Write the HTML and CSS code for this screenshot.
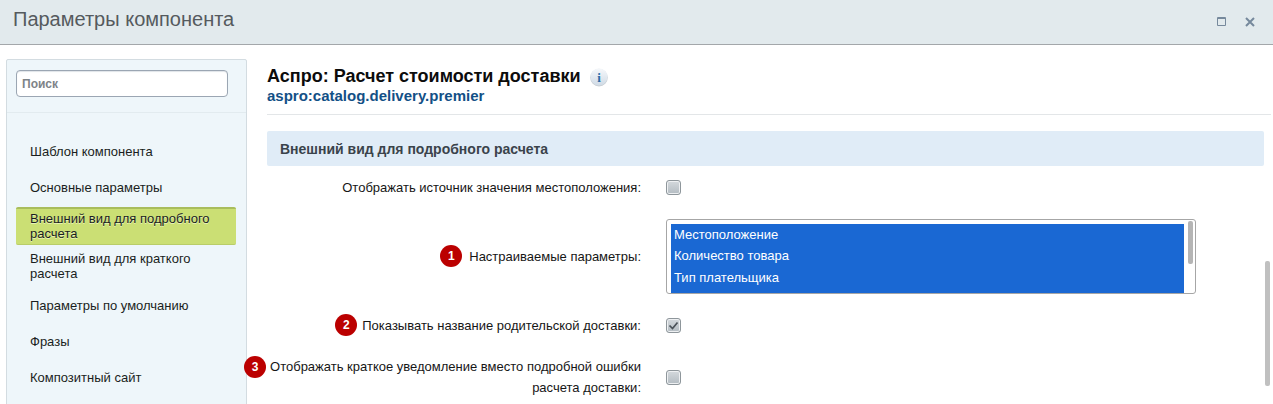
FILE: index.html
```html
<!DOCTYPE html>
<html lang="ru">
<head>
<meta charset="utf-8">
<title>Параметры компонента</title>
<link rel="stylesheet" href="styles.css">
</head>
<body>
<div class="dialog">
  <header class="titlebar">
    <h1 class="dialog-title">Параметры компонента</h1>
    <div class="window-tools">
      <svg class="tool" width="10" height="10" viewBox="0 0 10 10"><path d="M.5 .5h8v8h-8z M.5 1.5h8" fill="none" stroke="#76899c" stroke-width="1"/></svg>
      <svg class="tool" width="10" height="10" viewBox="0 0 10 10"><path d="M1 1l8 8M9 1l-8 8" fill="none" stroke="#76899c" stroke-width="2"/></svg>
    </div>
  </header>
  <div class="body-row">
    <aside class="sidebar">
      <div class="search-wrap"><input class="search" type="text" placeholder="Поиск"></div>
      <nav class="menu">
        <a class="menu-item">Шаблон компонента</a>
        <a class="menu-item">Основные параметры</a>
        <a class="menu-item active">Внешний вид для подробного расчета</a>
        <a class="menu-item double">Внешний вид для краткого расчета</a>
        <a class="menu-item">Параметры по умолчанию</a>
        <a class="menu-item">Фразы</a>
        <a class="menu-item">Композитный сайт</a>
      </nav>
    </aside>
    <main class="content">
      <div class="heading">
        <div class="heading-line">
          <h2 class="component-name">Аспро: Расчет стоимости доставки</h2>
          <span class="info"><svg width="20" height="20" viewBox="0 0 20 20"><defs><linearGradient id="ig" x1="0" y1="0" x2="0" y2="1"><stop offset="0" stop-color="#f6f8fb"/><stop offset="1" stop-color="#d0dbe6"/></linearGradient></defs><circle cx="10" cy="10.6" r="8.8" fill="#c9ced3"/><circle cx="10" cy="9.8" r="8.6" fill="url(#ig)"/><text x="10" y="15" text-anchor="middle" class="info-i">i</text></svg></span>
        </div>
        <div class="component-id">aspro:catalog.delivery.premier</div>
      </div>
      <div class="section-head">Внешний вид для подробного расчета</div>
      <div class="form">
        <div class="row row-first">
          <div class="label">Отображать источник значения местоположения:</div>
          <div class="control"><span class="check"></span></div>
        </div>
        <div class="row row-select">
          <div class="label"><span class="label-text"><span class="badge">1</span>Настраиваемые параметры:</span></div>
          <div class="control">
            <div class="listbox">
              <div class="options">
                <div class="option">Местоположение</div>
                <div class="option">Количество товара</div>
                <div class="option">Тип плательщика</div>
              </div>
              <span class="list-thumb"></span>
            </div>
          </div>
        </div>
        <div class="row row-third">
          <div class="label"><span class="label-text"><span class="badge badge-near">2</span>Показывать название родительской доставки:</span></div>
          <div class="control"><span class="check"><svg width="13" height="13" viewBox="0 0 13 13"><path d="M2.5 6.5l3 3 5-6" fill="none" stroke="#4a5158" stroke-width="1.7"/></svg></span></div>
        </div>
        <div class="row row-last">
          <div class="label"><span class="label-text"><span class="badge badge-far">3</span>Отображать краткое уведомление вместо подробной ошибки расчета доставки:</span></div>
          <div class="control"><span class="check"></span></div>
        </div>
      </div>
      <span class="page-thumb"></span>
    </main>
  </div>
</div>
</body>
</html>
```
FILE: styles.css
```css
* { box-sizing: border-box; }
html, body { margin: 0; height: 100%; overflow: hidden; background: #fff; }
body { font-family: "Liberation Sans", Arial, sans-serif; font-size: 13px; color: #1f1f1f; }
.dialog { display: flex; flex-direction: column; height: 404px; overflow: hidden; }
.titlebar { flex: none; height: 45px; background: #e2eaed; border-bottom: 1px solid #a3a7aa; display: flex; align-items: center; justify-content: space-between; padding: 0 18px 6px 13px; }
.dialog-title { margin: 0; font-weight: 400; font-size: 20px; color: #555a5e; }
.window-tools { display: flex; gap: 18px; align-items: center; padding-top: 5px; }
.tool { display: block; }
.body-row { flex: 1; display: flex; min-height: 0; padding: 14px 2px 0 6px; }
.sidebar { flex: none; width: 241px; height: 360px; background: #eef6fa; border: 1px solid #d3dce1; border-radius: 2px 2px 0 0; }
.search-wrap { padding: 10px 18px 15px 9px; border-bottom: 1px solid #e2ebef; height: 53px; }
.search { display: block; width: 212px; height: 27px; border: 1px solid #9ba6b3; border-radius: 4px; background: #fff; padding: 0 5px; font: bold 12px "Liberation Sans", Arial, sans-serif; box-shadow: inset 0 1px 1px #dfe4e8; outline: none; }
.search::placeholder { color: #7d8388; opacity: 1; }
.menu { display: flex; flex-direction: column; padding: 20px 0 0 9px; }
.menu-item { display: flex; align-items: center; width: 220px; height: 36px; padding: 0 14px; line-height: 15px; font-size: 13px; color: #1a1e21; }
.menu-item.active { height: 38px; margin-top: 2px; padding-bottom: 1px; background: #cbdf74; border-top: 2px solid #a9bd5c; border-bottom: 1px solid #b9cd68; border-radius: 2px; text-shadow: 0 1px 0 #e8f2b8; }
.menu-item.double { height: 42px; }
.content { position: relative; flex: 1; padding-left: 20px; min-width: 0; }
.heading { height: 56px; border-bottom: 1px solid #e3e6e8; padding-top: 7px; }
.heading-line { display: flex; align-items: center; height: 20px; }
.component-name { margin: 0; font-size: 18px; line-height: 20px; font-weight: 700; color: #0c0c0c; }
.info { margin-left: 8px; display: flex; margin-top: 2px; }
.info-i { font: bold 13px "Liberation Serif", serif; fill: #2b6ba5; }
.component-id { font-size: 15px; line-height: 17px; font-weight: 700; color: #135086; margin-top: 1px; }
.section-head { margin: 16px 7px 0 0; height: 35px; line-height: 36px; background: #e0ecf7; border-radius: 2px; padding-left: 13px; font-size: 14px; font-weight: 700; color: #3a434b; }
.form { display: flex; flex-direction: column; }
.row { display: grid; grid-template-columns: 374px 1fr; column-gap: 25px; align-items: center; }
.row-first { height: 42px; }
.row-select { height: 96px; }
.row-third { height: 42px; }
.row-last { height: 62px; }
.label { text-align: right; font-size: 13px; line-height: 21px; color: #161616; }
.label-text { position: relative; display: inline-block; }
.badge { position: absolute; left: -29px; top: 50%; width: 22px; height: 22px; margin-top: -11px; border-radius: 50%; background: #bb0000; color: #fff; font-size: 12px; font-weight: 700; line-height: 22px; text-align: center; }
.badge-near { left: -27px; }
.badge-far { left: -23px; top: 11px; }
.control { display: flex; align-items: center; }
.check { display: flex; align-items: center; justify-content: center; width: 15px; height: 15px; border: 1px solid #8e969b; border-radius: 3px; background: linear-gradient(#d4d9dd, #b4bcc2); box-shadow: inset 0 0 0 1px #eef0f2; }
.listbox { position: relative; width: 530px; height: 75px; border: 1px solid #a6a6a6; border-radius: 3px; background: #fff; padding: 4px 0 0 4px; overflow: hidden; }
.options { width: 513px; height: 70px; background: #1a68d3; color: #fff; padding: 0 3px; }
.option { font-size: 13px; height: 21.5px; line-height: 21.5px; }
.list-thumb { position: absolute; top: 1px; right: 2px; width: 5px; height: 43px; background: #b5b5b5; border-radius: 2px; }
.page-thumb { position: absolute; right: 1px; top: 202px; width: 5px; height: 125px; background: #c0c0c0; border-radius: 2px; }
```
